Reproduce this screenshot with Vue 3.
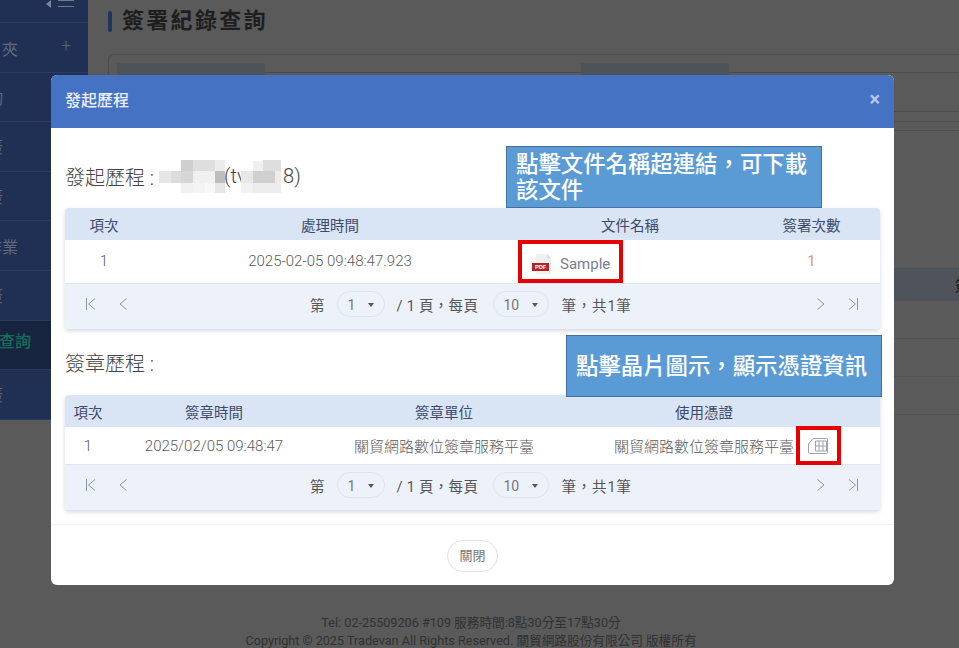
<script setup>
const sideRows = [
  { text: '夾', plus: true, cls: 'r-near' },
  { text: '詢', cls: 'r-edge' },
  { text: '簽', cls: 'r-edge' },
  { text: '簽', cls: 'r-edge' },
  { text: '作業', cls: 'r-near' },
  { text: '簽', cls: 'r-edge' },
  { text: '錄查詢', active: true },
  { text: '簽', cls: 'r-edge' }
]
const blurA = [
  [0,12,12,12,'#e6e6e6'],[12,12,10,12,'#dcdcdc'],[22,1,12,11,'#cfcfcf'],[22,12,12,12,'#d6d6d6'],[34,1,22,11,'#dedede'],
  [34,12,22,12,'#f0f0f0'],[56,1,10,11,'#ececec'],[56,12,10,12,'#bdbdbd'],[22,24,12,10,'#f0f0f0'],[34,24,12,10,'#f3f3f3'],
  [46,24,10,10,'#f8f8f8'],[56,24,10,10,'#e6e6e6']
]
const blurB = [
  [0,12,12,12,'#e8e8e8'],[12,12,22,12,'#d0d0d0'],[12,2,10,10,'#f0f0f0'],[22,1,18,11,'#dedede'],[34,12,6,12,'#ececec'],
  [0,24,12,10,'#f2f2f2'],[12,24,28,10,'#ededed']
]
</script>

<template>
  <div class="page">
    <aside class="sidebar">
      <div class="side-top">
        <span class="caret"></span>
        <span class="burger"><i></i><i></i></span>
      </div>
      <div v-for="(row, i) in sideRows" :key="i" class="side-row" :class="[row.cls, { active: row.active }]">
        <span class="side-text">{{ row.text }}</span>
        <span v-if="row.plus" class="plus">+</span>
      </div>
    </aside>

    <main class="main">
      <div class="page-title"><span class="title-bar"></span><h1>簽署紀錄查詢</h1></div>
      <div class="search-card">
        <div class="search-row">
          <span class="label-block"></span>
          <span class="input-block"></span>
          <span class="label-block"></span>
          <span class="input-block"></span>
        </div>
      </div>
      <div class="bg-lines">
        <div class="bg-line"></div>
        <div class="bg-line"></div>
      </div>
      <div class="bg-head"><span>簽</span></div>
      <div class="bg-rows">
        <div class="bg-row"></div>
        <div class="bg-row"></div>
        <div class="bg-row"></div>
      </div>
      <footer class="footer">
        <div>Tel: 02-25509206 #109 服務時間:8點30分至17點30分</div>
        <div>Copyright © 2025 Tradevan All Rights Reserved. 關貿網路股份有限公司 版權所有</div>
      </footer>
    </main>

    <section class="modal">
      <header class="modal-head">
        <span>發起歷程</span>
        <span class="close">×</span>
      </header>
      <div class="modal-body">
        <h2 class="section-title first">
          <span>發起歷程 :</span>
          <svg class="blur blur-a" width="66" height="34" viewBox="0 0 66 34">
            <rect v-for="(b, i) in blurA" :key="i" :x="b[0]" :y="b[1]" :width="b[2]" :height="b[3]" :fill="b[4]" />
          </svg>
          <span class="after-blur">(tv</span>
          <svg class="blur blur-b" width="42" height="34" viewBox="0 0 42 34">
            <rect v-for="(b, i) in blurB" :key="i" :x="b[0]" :y="b[1]" :width="b[2]" :height="b[3]" :fill="b[4]" />
          </svg>
          <span>8)</span>
        </h2>

        <div class="table">
          <div class="grid grid-a thead">
            <span>項次</span><span>處理時間</span><span>文件名稱</span><span>簽署次數</span>
          </div>
          <div class="grid grid-a tbody tall">
            <span>1</span>
            <span>2025-02-05 09:48:47.923</span>
            <span class="doc">
              <svg class="pdf" width="22" height="22" viewBox="0 0 22 22">
                <path d="M4 1h11l4 4v16H4z" fill="#f0f0f0" />
                <path d="M15 1l4 4h-4z" fill="#dcdcdc" />
                <rect x="0" y="10" width="17" height="8" fill="#b3252c" />
                <text x="8.5" y="16.2" text-anchor="middle" class="pdf-text">PDF</text>
              </svg>
              <a class="doc-link">Sample</a>
            </span>
            <span class="count">1</span>
          </div>
          <div class="pager">
            <span class="pager-nav">
              <svg width="12" height="14" viewBox="0 0 12 14"><path d="M1.5 1v12M10 1.5 3.5 7l6.5 5.5" /></svg>
              <svg width="12" height="14" viewBox="0 0 12 14"><path d="M9.5 1.5 3 7l6.5 5.5" /></svg>
            </span>
            <span class="pager-center">
              <span>第</span>
              <span class="select s1">1<i class="tri"></i></span>
              <span class="mid">/ 1 頁，每頁</span>
              <span class="select s2">10<i class="tri"></i></span>
              <span class="total">筆，共1筆</span>
            </span>
            <span class="pager-nav right">
              <svg width="12" height="14" viewBox="0 0 12 14"><path d="m2.5 1.5 6.500 5.500-6.500 5.500" /></svg>
              <svg width="12" height="14" viewBox="0 0 12 14"><path d="m2 1.5 6.500 5.500-6.500 5.500M10.500 1v12" /></svg>
            </span>
          </div>
        </div>

        <h2 class="section-title second">簽章歷程 :</h2>

        <div class="table">
          <div class="grid grid-b thead">
            <span>項次</span><span>簽章時間</span><span>簽章單位</span><span>使用憑證</span>
          </div>
          <div class="grid grid-b tbody short">
            <span>1</span>
            <span>2025/02/05 09:48:47</span>
            <span>關貿網路數位簽章服務平臺</span>
            <span class="cert">
              <span>關貿網路數位簽章服務平臺</span>
              <svg class="chip" width="20" height="16" viewBox="0 0 20 16">
                <path d="M5 .5h13.500a1 1 0 0 1 1 1v13a1 1 0 0 1-1 1h-17a1 1 0 0 1-1-1V6z" />
                <path d="M7.500 3h11v10h-11zM11 3v10M15 3v10M7.500 8h11" />
              </svg>
            </span>
          </div>
          <div class="pager">
            <span class="pager-nav">
              <svg width="12" height="14" viewBox="0 0 12 14"><path d="M1.5 1v12M10 1.5 3.5 7l6.5 5.5" /></svg>
              <svg width="12" height="14" viewBox="0 0 12 14"><path d="M9.5 1.5 3 7l6.5 5.5" /></svg>
            </span>
            <span class="pager-center">
              <span>第</span>
              <span class="select s1">1<i class="tri"></i></span>
              <span class="mid">/ 1 頁，每頁</span>
              <span class="select s2">10<i class="tri"></i></span>
              <span class="total">筆，共1筆</span>
            </span>
            <span class="pager-nav right">
              <svg width="12" height="14" viewBox="0 0 12 14"><path d="m2.5 1.5 6.500 5.500-6.500 5.500" /></svg>
              <svg width="12" height="14" viewBox="0 0 12 14"><path d="m2 1.5 6.500 5.500-6.500 5.500M10.500 1v12" /></svg>
            </span>
          </div>
        </div>
      </div>
      <div class="modal-foot">
        <button class="close-btn" type="button">關閉</button>
      </div>

      <div class="note note-a">點擊文件名稱超連結，可下載該文件</div>
      <div class="note note-b">點擊晶片圖示，顯示憑證資訊</div>
      <div class="mark mark-a"></div>
      <div class="mark mark-b"></div>
    </section>
  </div>
</template>

<style scoped>
.page {
  position: relative;
  display: flex;
  width: 959px;
  height: 648px;
  overflow: hidden;
  background: #5a5a5a;
  font-family: Roboto, "Noto Sans CJK TC", sans-serif;
  color: #666;
}
.sidebar {
  flex: 0 0 88px;
  height: 420px;
  background: #1f3054;
  color: #5f6a7e;
  overflow: hidden;
}
.side-top {
  position: relative;
  height: 23px;
  border-bottom: 1px solid #2c3c5e;
  box-sizing: border-box;
}
.caret {
  position: absolute;
  left: 46px;
  top: 0;
  border-style: solid;
  border-width: 4px 5px 4px 0;
  border-color: transparent #7c8595 transparent transparent;
}
.burger {
  position: absolute;
  left: 58px;
  top: 0;
  width: 16px;
  height: 8px;
}
.burger i {
  display: block;
  height: 1px;
  margin-bottom: 5px;
  background: #6f7a8d;
}
.side-row {
  box-sizing: border-box;
  height: 49.6px;
  display: flex;
  align-items: center;
  justify-content: flex-end;
  border-bottom: 1px solid #2c3c5e;
  position: relative;
  font-size: 16px;
}
.side-text {
  position: absolute;
  right: 70px;
  white-space: nowrap;
}
.r-edge .side-text {
  right: 85px;
}
.r-near .side-text {
  top: 13px;
}
.plus {
  position: absolute;
  left: 61px;
  top: 12px;
  font-size: 18px;
  font-weight: 300;
  color: #566278;
}
.side-row.active {
  background: #17243f;
  color: #14705a;
}
.side-row.active .side-text {
  right: 57px;
  top: 7px;
  font-weight: 500;
}
.main {
  flex: 1;
  display: flex;
  flex-direction: column;
  min-width: 0;
  padding-left: 20px;
}
.page-title {
  display: flex;
  align-items: center;
  gap: 10px;
  height: 43px;
}
.title-bar {
  width: 4px;
  height: 21px;
  border-radius: 2px;
  background: #1f3460;
}
.page-title h1 {
  margin: -2px 0 0;
  font-size: 22px;
  line-height: 26px;
  font-weight: 700;
  letter-spacing: 2.3px;
  color: #1e1e1e;
}
.search-card {
  margin-top: 11px;
  height: 48px;
  border: 1px solid #4c4c4c;
  border-right: 0;
  border-radius: 6px 0 0 6px;
  padding: 8px 0 0 8px;
}
.search-row {
  display: flex;
}
.label-block {
  flex: none;
  width: 148px;
  height: 40px;
  background: #4e5358;
}
.input-block {
  flex: none;
  width: 316px;
  margin-top: 9px;
  height: 30px;
  border-top: 1px solid #4c4c4c;
}
.bg-lines {
  margin-top: 9px;
}
.bg-line {
  height: 8px;
  border-top: 1px solid #4f4f4f;
}
.bg-head {
  margin-top: 129px;
  height: 32px;
  background: #4f545c;
  color: #1c1c1c;
  display: flex;
  align-items: center;
  justify-content: flex-end;
  font-size: 14px;
  font-weight: 500;
  border-top: 1px solid #4d5056;
  margin-right: -10px;
}
.bg-rows {
  flex: 1;
}
.bg-row {
  height: 37px;
  border-bottom: 1px solid #4f5257;
}
.footer {
  margin-top: auto;
  height: 34px;
  margin-left: -108px;
  text-align: center;
  font-size: 12.65px;
  line-height: 18px;
  color: #313131;
  margin-right: 17px;
}
.footer div {
  white-space: nowrap;
}
.modal {
  position: absolute;
  left: 51px;
  top: 75px;
  width: 843px;
  height: 510px;
  background: #fff;
  border-radius: 6px;
  overflow: hidden;
  display: flex;
  flex-direction: column;
}
.modal-head {
  flex: 0 0 53px;
  display: flex;
  align-items: center;
  justify-content: space-between;
  padding: 0 14px 5px;
  box-sizing: border-box;
  background: #4672c4;
  color: #eaf0fb;
  font-size: 16px;
  font-weight: 500;
}
.close {
  font-size: 20px;
  font-weight: 700;
  color: #b7c8ef;
  line-height: 1;
}
.modal-body {
  flex: 1;
  padding: 0 14px;
  border-bottom: 1px solid #f2f2f2;
}
.section-title {
  margin: 0;
  font-size: 20px;
  font-weight: 300;
  color: #444;
  white-space: nowrap;
}
.section-title.first {
  display: flex;
  align-items: center;
  height: 80px;
  padding-top: 16px;
  box-sizing: border-box;
}
.blur {
  flex: none;
}
.blur-a { margin-left: 5px; }
.after-blur { margin-left: -1px; width: 17px; overflow: hidden; }
.section-title.second {
  height: 66px;
  line-height: 70px;
}
.table {
  width: 815px;
  border-radius: 4px;
  box-shadow: 0 2px 4px rgba(80, 100, 130, .25);
  font-size: 15px;
}
.grid {
  display: grid;
  align-items: center;
  justify-items: center;
}
.grid-a { grid-template-columns: 78px 374px 226px 137px; }
.grid-b { grid-template-columns: 46px 206px 254px 266px; }
.thead {
  height: 32px;
  background: #d9e4f4;
  color: #3c4b6b;
  font-size: 14.5px;
  font-weight: 400;
  border-radius: 4px 4px 0 0;
}
.tbody {
  background: #fff;
  color: #5c5c5c;
  font-weight: 300;
}
.tall {
  height: 43px;
}
.short {
  height: 37px;
}
.tall > span {
  position: relative;
  top: -1px;
}
.doc {
  justify-self: start;
  display: flex;
  align-items: center;
  gap: 6px;
  margin-left: 15px;
  top: 2px !important;
}
.pdf-text {
  font-family: "Liberation Sans", sans-serif;
  font-size: 5.6px;
  font-weight: 700;
  fill: #fff;
}
.doc-link {
  color: #76808f;
  font-size: 15px;
  font-weight: 400;
}
.count {
  color: #c9a08c;
  font-weight: 400;
}
.cert {
  display: flex;
  align-items: center;
}
.chip {
  flex: none;
  margin-left: 14px;
  margin-right: -34px;
  fill: none;
  stroke: #9aa4b4;
  stroke-width: 1;
}
.pager {
  height: 46px;
  display: flex;
  align-items: center;
  background: #edf2fa;
  border-top: 1px solid #dfe6f0;
  box-sizing: border-box;
  border-radius: 0 0 4px 4px;
  font-size: 14.5px;
  font-weight: 400;
  color: #555;
  padding-bottom: 5px;
}
.pager-nav {
  flex: none;
  display: flex;
  gap: 20px;
  margin-left: 20px;
  width: 225px;
}
.pager-nav.right {
  margin-left: 0;
  width: auto;
}
.pager-nav svg {
  fill: none;
  stroke: #8a95a6;
  stroke-width: 1;
}
.pager-center {
  flex: none;
  display: flex;
  align-items: center;
  width: 505px;
}
.select {
  box-sizing: border-box;
  display: flex;
  align-items: center;
  justify-content: space-between;
  height: 26px;
  border: 1px solid #dde3ec;
  border-radius: 13px;
  font-size: 14px;
  color: #777;
  padding: 2px 10px 0;
}
.s1 { width: 48px; margin-left: 12px; }
.s2 { width: 56px; margin-left: 12px; }
.mid { margin-left: 12px; width: 84px; white-space: nowrap; letter-spacing: .3px; }
.total { margin-left: 13px; white-space: nowrap; letter-spacing: .8px; }
.tri {
  border-style: solid;
  border-width: 4px 3.5px 0;
  border-color: #555 transparent transparent;
}
.modal-foot {
  flex: 0 0 60px;
  display: flex;
  justify-content: center;
  padding-top: 15px;
  box-sizing: border-box;
}
.close-btn {
  width: 51px;
  height: 32px;
  background: #fff;
  border: 1px solid #e2e2e2;
  border-radius: 16px;
  color: #777;
  font: 400 13px/28px Roboto, "Noto Sans CJK TC", sans-serif;
  padding: 0;
}
.note {
  position: absolute;
  box-sizing: border-box;
  background: #5b9bd5;
  border: 1px solid #41719c;
  color: #fff;
  font-weight: 500;
  font-size: 22.4px;
  line-height: 26px;
}
.note-a {
  left: 455px;
  top: 71px;
  width: 316px;
  height: 62px;
  padding: 4px 9px;
}
.note-b {
  left: 515px;
  top: 260px;
  width: 316px;
  height: 62px;
  padding: 17px 9px;
  white-space: nowrap;
}
.mark {
  position: absolute;
  box-sizing: border-box;
  border: 4px solid #e60000;
}
.mark-a {
  left: 467px;
  top: 165px;
  width: 105px;
  height: 43px;
}
.mark-b {
  left: 745px;
  top: 351px;
  width: 45px;
  height: 39px;
}
</style>
